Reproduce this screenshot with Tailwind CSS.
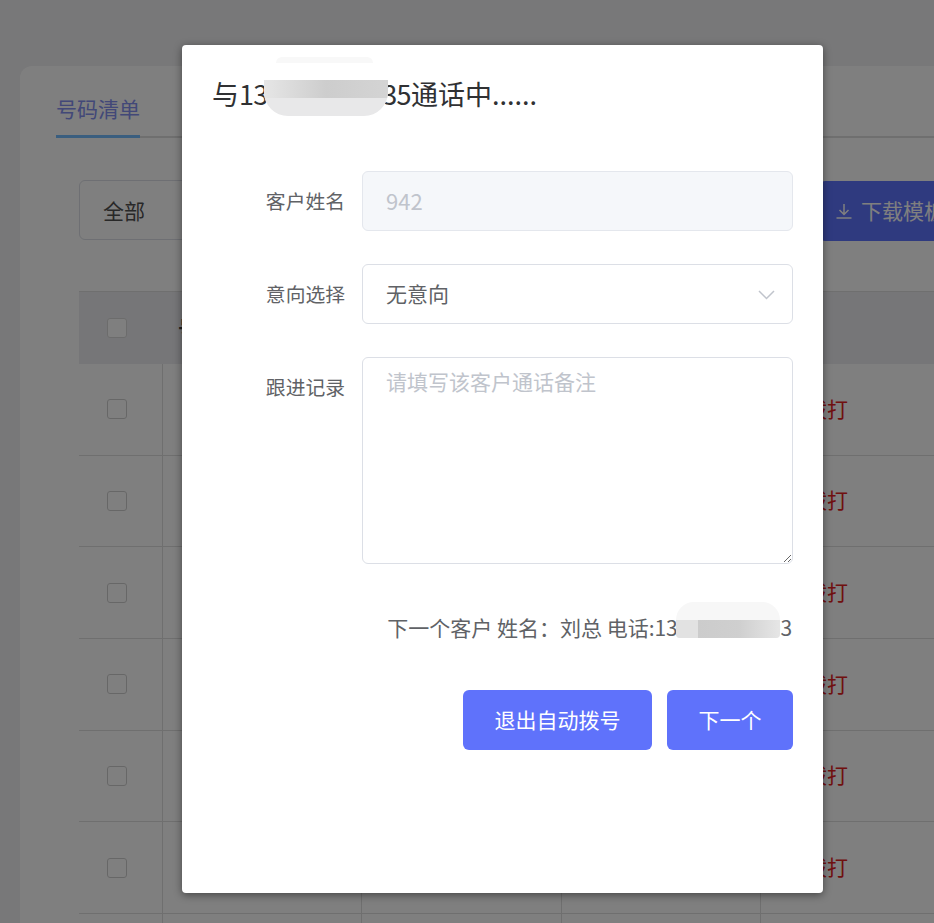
<!DOCTYPE html>
<html lang="zh">
<head>
<meta charset="utf-8">
<script src="https://cdn.jsdelivr.net/npm/@tailwindcss/browser@4"></script>
</head>
<body class="m-0">
<div class="relative w-[934px] h-[923px] overflow-hidden bg-[#f0f0f2] font-['Noto_Sans_CJK_SC','Noto_Sans',sans-serif] text-[21px] font-normal text-[#606266]">
  <!-- page behind the dialog -->
  <div class="ml-5 mt-[66px] w-[1000px] h-[900px] rounded-t-xl bg-white pt-[22px]">
    <div class="ml-9 border-b-2 border-[#dfdfdf] h-[50px]">
      <div class="w-[84px] h-[50px] border-b-[3px] border-[#74bcff] text-[#8490f0] leading-[40px] whitespace-nowrap">号码清单</div>
    </div>
    <div class="ml-[59px] mt-[42px] flex items-start">
      <div class="shrink-0 w-[300px] h-[60px] rounded-md border border-[#dcdfe6] pl-[23px] leading-[58px] text-[#505050]">全部</div>
      <div class="shrink-0 ml-[440px] w-[300px] h-[60px] rounded-md bg-[#5f75ff] text-white flex items-center pl-[17px] gap-[9px] mt-[1px]">
        <svg width="16" height="18" viewBox="0 0 16 18" fill="none" stroke="currentColor" stroke-width="1.500"><path d="M8 2v10M3.500 8L8 12.500 12.500 8M0.500 16h15"/></svg>
        <span>下载模板</span>
      </div>
    </div>
    <div class="ml-[59px] mt-[50px] w-[900px] border-t border-[#dfdfdf]">
      <div class="h-[72px] bg-[#ededf0] flex items-center">
        <div class="w-[84px] pl-[28px]"><span class="block size-5 rounded-[3px] border border-[#d8d8d8] bg-white"></span></div>
        <div class="pl-[15px] font-bold text-[#404040]">号码</div>
      </div>
      <div class="grid grid-cols-[84px_199px_200px_199px_1fr] auto-rows-[91.67px] [&>div]:border-b [&>div]:border-[#dfdfdf] [&>div:not(:nth-child(5n))]:border-r">
        <div class="flex items-center pl-[28px]"><span class="block size-5 rounded-[3px] border border-[#cfcfcf]"></span></div><div></div><div></div><div></div><div class="flex items-center pl-[45px] pb-[2px] text-[#e02020]">拨打</div>
        <div class="flex items-center pl-[28px]"><span class="block size-5 rounded-[3px] border border-[#cfcfcf]"></span></div><div></div><div></div><div></div><div class="flex items-center pl-[45px] pb-[2px] text-[#e02020]">拨打</div>
        <div class="flex items-center pl-[28px]"><span class="block size-5 rounded-[3px] border border-[#cfcfcf]"></span></div><div></div><div></div><div></div><div class="flex items-center pl-[45px] pb-[2px] text-[#e02020]">拨打</div>
        <div class="flex items-center pl-[28px]"><span class="block size-5 rounded-[3px] border border-[#cfcfcf]"></span></div><div></div><div></div><div></div><div class="flex items-center pl-[45px] pb-[2px] text-[#e02020]">拨打</div>
        <div class="flex items-center pl-[28px]"><span class="block size-5 rounded-[3px] border border-[#cfcfcf]"></span></div><div></div><div></div><div></div><div class="flex items-center pl-[45px] pb-[2px] text-[#e02020]">拨打</div>
        <div class="flex items-center pl-[28px]"><span class="block size-5 rounded-[3px] border border-[#cfcfcf]"></span></div><div></div><div></div><div></div><div class="flex items-center pl-[45px] pb-[2px] text-[#e02020]">拨打</div>
        <div></div><div></div><div></div><div></div><div></div>
      </div>
    </div>
  </div>

  <!-- overlay -->
  <div class="absolute inset-0 bg-black/50"></div>

  <!-- dialog -->
  <div class="absolute left-[182px] top-[45px] w-[641px] h-[848px] rounded-[4px] bg-white shadow-[0_2px_8px_rgba(0,0,0,0.45)]">
    <div class="pl-[30px] pt-[29px] h-[70px] text-[27px] leading-[40px] text-[#303133] whitespace-nowrap">与<span class="tracking-[-0.66px]">138000000035</span>通话中......</div>
    <div class="mt-[56px] pr-[30px] flex flex-col gap-[33px]">
      <div class="flex">
        <label class="w-[163px] text-right text-[19.800px] leading-[60px]">客户姓名</label>
        <input disabled value="942" class="ml-[17px] w-[431px] h-[60px] rounded-md border border-[#e4e7ed] bg-[#f5f7fa] px-[23px] pb-[3px] text-[22px] font-normal text-[#c0c4cc] outline-none">
      </div>
      <div class="flex">
        <label class="w-[163px] text-right text-[19.800px] leading-[60px]">意向选择</label>
        <div class="ml-[17px] w-[431px] h-[60px] rounded-md border border-[#dcdfe6] px-[23px] flex items-center justify-between">
          <span>无意向</span>
          <svg class="-mr-[6px] mt-[1px]" width="17" height="10" viewBox="0 0 17 10" fill="none" stroke="#c0c4cc" stroke-width="1.500"><path d="M1 1l7.500 7.500L16 1"/></svg>
        </div>
      </div>
      <div class="flex">
        <label class="w-[163px] text-right text-[19.800px] leading-[60px]">跟进记录</label>
        <textarea placeholder="请填写该客户通话备注" class="ml-[17px] w-[431px] h-[207px] rounded-md border border-[#dcdfe6] px-[23px] py-[8px] text-[21px] font-normal leading-[31px] placeholder:text-[#c0c4cc] outline-none"></textarea>
      </div>
    </div>
    <div class="mt-[48px] pr-[31px] text-right leading-[30px] whitespace-nowrap">下一个客户 姓名：刘总 电话:<span class="tracking-[-0.2px]">138000000003</span></div>
    <div class="mt-[48px] pr-[30px] flex justify-end gap-[15px]">
      <button class="w-[189px] h-[60px] rounded-md bg-[#5f72fb] text-white">退出自动拨号</button>
      <button class="w-[126px] h-[60px] rounded-md bg-[#5f72fb] text-white">下一个</button>
    </div>

    <!-- blurred phone number, title -->
    <div class="absolute left-[94px] top-[12px] w-[97px] h-[6px] rounded-t-full bg-[#f8f8f8]"></div>
    <div class="absolute left-[82px] top-[18px] w-[124px] h-[53px] rounded-b-[24px] overflow-hidden bg-white flex flex-col">
      <div class="h-[17px] bg-white"></div>
      <div class="h-[18px] bg-linear-to-r from-[#e6e6e6] via-[#cdcdcd] to-[#d4d4d4]"></div>
      <div class="h-[18px] bg-[#e8e8e9]"></div>
    </div>
    <!-- blurred phone number, next customer -->
    <div class="absolute left-[494px] top-[557px] w-[104px] h-[36px] rounded-t-[18px] rounded-b-[4px] overflow-hidden flex flex-col bg-[#f7f7f7]">
      <div class="h-[18px]"></div>
      <div class="h-[18px] flex">
        <div class="w-[22px] bg-[#e2e2e2]"></div>
        <div class="flex-1 bg-linear-to-r from-[#cccccc] via-[#cfcfcf] to-[#e6e6e6]"></div>
      </div>
    </div>
  </div>
</div>
</body>
</html>
